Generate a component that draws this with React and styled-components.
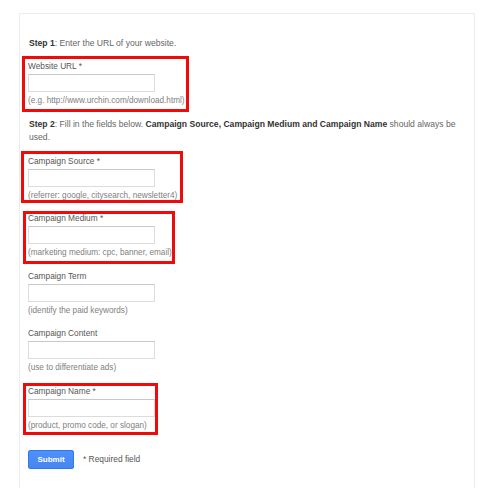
import React from "react";
import styled, { createGlobalStyle } from "styled-components";

const Global = createGlobalStyle`
  html, body { margin: 0; padding: 0; background: #fff; }
  body { font-family: "Liberation Sans", Arial, sans-serif; }
`;

const Page = styled.div`
  width: 480px;
  height: 488px;
  padding: 13px 0 0 19px;
  box-sizing: border-box;
  overflow: hidden;
`;

const Panel = styled.div`
  width: 456px;
  height: 475px;
  box-sizing: border-box;
  border: 1px solid #ececec;
  border-bottom: none;
  padding: 23px 8px 0 8px;
  display: flex;
  flex-direction: column;
  align-items: flex-start;
`;

const StepText = styled.p`
  margin: ${(p) => p.$mt || 0}px 0 0 1px;
  font-size: 8.6px;
  line-height: 13px;
  color: #666;
  b { color: #333; font-weight: bold; }
`;

const Field = styled.div`
  position: relative;
  display: flex;
  flex-direction: column;
  align-items: flex-start;
  margin-top: ${(p) => p.$mt}px;
`;

const Label = styled.label`
  font-size: 8.3px;
  line-height: 12px;
  color: #555;
`;

const Input = styled.input`
  margin-top: 2px;
  width: 127px;
  height: 18px;
  box-sizing: border-box;
  border: 1px solid #dcdcdc;
  border-top-color: #c8c8c8;
  background: #fff;
  padding: 0 4px;
  outline: none;
`;

const Hint = styled.span`
  margin-top: 3px;
  font-size: 8.2px;
  line-height: 12px;
  color: #808080;
  white-space: nowrap;
`;

const Highlight = styled.span`
  position: absolute;
  top: ${(p) => p.$top}px;
  left: ${(p) => p.$left}px;
  width: ${(p) => p.$w}px;
  height: ${(p) => p.$h}px;
  box-sizing: border-box;
  border: 3px solid #f00a0a;
  pointer-events: none;
`;

const Actions = styled.div`
  display: flex;
  align-items: center;
  gap: 9px;
  margin-top: 18px;
`;

const Submit = styled.button`
  width: 46px;
  height: 19px;
  box-sizing: border-box;
  border: 1px solid #3079ed;
  border-radius: 2px;
  background: linear-gradient(#4d90fe, #4787ed);
  color: #fff;
  font-family: "Liberation Sans", Arial, sans-serif;
  font-size: 8px;
  font-weight: bold;
  padding: 0;
`;

const Note = styled.span`
  font-size: 8.4px;
  color: #555;
`;

const fields = [
  { label: "Website URL *", hint: "(e.g. http://www.urchin.com/download.html)", mt: 9.5, hl: { top: -4, left: -6, w: 167, h: 56 } },
  { step2: true },
  { label: "Campaign Source *", hint: "(referrer: google, citysearch, newsletter4)", mt: 10.5, hl: { top: -4, left: -7, w: 162, h: 52 } },
  { label: "Campaign Medium *", hint: "(marketing medium: cpc, banner, email)", mt: 10.5, hl: { top: -1, left: -5, w: 152, h: 53 } },
  { label: "Campaign Term", hint: "(identify the paid keywords)", mt: 10.5 },
  { label: "Campaign Content", hint: "(use to differentiate ads)", mt: 10.5 },
  { label: "Campaign Name *", hint: "(product, promo code, or slogan)", mt: 10.5, hl: { top: -2, left: -5, w: 135, h: 52 } },
];

export default function App() {
  return (
    <>
      <Global />
      <Page>
        <Panel>
          <StepText>
            <b>Step 1</b>: Enter the URL of your website.
          </StepText>
          {fields.map((f, i) =>
            f.step2 ? (
              <StepText key={i} $mt={11.5}>
                <b>Step 2</b>: Fill in the fields below. <b>Campaign Source, Campaign Medium and Campaign Name</b> should always be
                <br />
                used.
              </StepText>
            ) : (
              <Field key={i} $mt={f.mt}>
                <Label>{f.label}</Label>
                <Input type="text" />
                <Hint>{f.hint}</Hint>
                {f.hl && <Highlight $top={f.hl.top} $left={f.hl.left} $w={f.hl.w} $h={f.hl.h} />}
              </Field>
            )
          )}
          <Actions>
            <Submit type="button">Submit</Submit>
            <Note>* Required field</Note>
          </Actions>
        </Panel>
      </Page>
    </>
  );
}
